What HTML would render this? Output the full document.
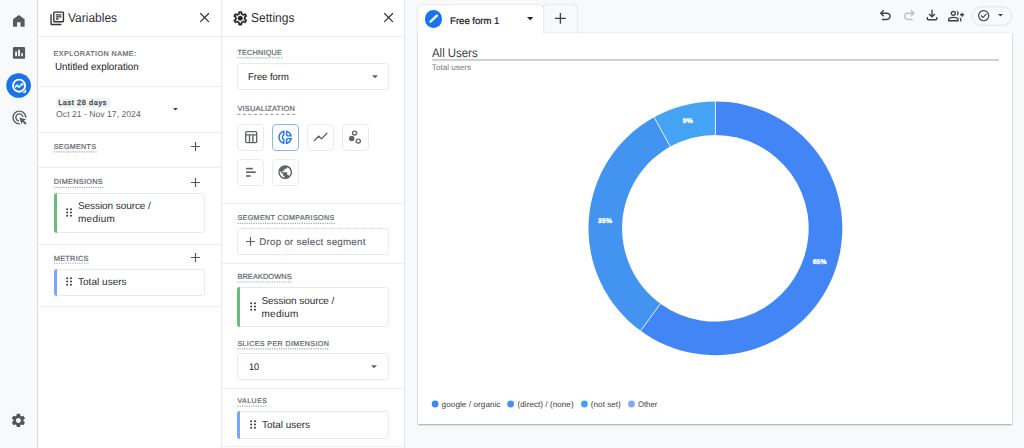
<!DOCTYPE html>
<html><head><meta charset="utf-8"><title>Explorations</title>
<style>
*{box-sizing:border-box;margin:0;padding:0}
html,body{width:1024px;height:448px;overflow:hidden;background:#f8f9fa;font-family:"Liberation Sans",sans-serif;color:#202124}
.a{position:absolute}
.t{position:absolute;white-space:nowrap;line-height:1;text-rendering:geometricPrecision}
#nav{left:0;top:0;width:38px;height:448px;background:#f8f9fa;border-right:1px solid #dadce0}
#vars{left:38px;top:0;width:184px;height:448px;background:#fff;border-right:1px solid #e6e8eb}
#sets{left:222px;top:0;width:183px;height:448px;background:#fff;border-right:1px solid #e6e8eb}
.hl{position:absolute;height:1px;background:#eaecef}
.ul{position:absolute;height:0;border-top:1px dotted #9aa0a6}
.chip{position:absolute;background:#fff;border:1px solid #e8eaed;border-radius:3px}
.chip i{position:absolute;left:-1px;top:-1px;bottom:-1px;width:3px;border-radius:3px 0 0 3px}
.vis{position:absolute;width:27px;height:27px;border:1px solid #e9ebee;border-radius:4px;background:#fff}
svg{position:absolute;overflow:visible}
</style></head><body>
<div id="nav" class="a"></div>
<div id="vars" class="a"></div>
<div id="sets" class="a"></div>

<!-- nav icons -->
<svg style="left:13.1px;top:14.900px" width="11.6" height="11.800" viewBox="0 0 12 12.5" preserveAspectRatio="none" fill="#565a5f"><path d="M6 0 L0 4.500 V12.500 H4.200 V7.700 H7.800 V12.500 H12 V4.500 Z"/></svg>
<svg style="left:0;top:40px" width="38" height="24" viewBox="0 40 38 24"><rect x="12.900" y="46.900" width="12.200" height="11.900" rx="1.300" fill="#565a5f"/><rect x="15.100" y="51.500" width="1.900" height="4.700" fill="#f1f3f4"/><rect x="18.100" y="49.700" width="1.900" height="6.500" fill="#f1f3f4"/><rect x="21.200" y="53.100" width="1.700" height="3.100" fill="#f1f3f4"/></svg>
<svg style="left:0;top:70px" width="38" height="30" viewBox="0 70 38 30"><circle cx="18.600" cy="85.450" r="12.300" fill="#1a73e8"/></svg>
<svg style="left:0;top:70px" width="38" height="30" viewBox="0 70 38 30" fill="none" stroke="#fff" stroke-linejoin="round" stroke-linecap="round"><circle cx="19.080" cy="85.670" r="6.050" stroke-width="1.900"/><path d="M26.050 88.700 V92.650 H22.100 A7 7 0 0 0 26.050 88.700 Z" fill="#fff" stroke="none"/><path d="M15.400 86.900 L17.300 85 L18.900 87.300 L21.900 84.300" stroke-width="1.500"/><path d="M20.300 83.200 H23.300 V86.200 Z" fill="#fff" stroke="none"/></svg>
<svg style="left:10.8px;top:109.2px" width="16.8" height="16.8" viewBox="0 0 24 24" fill="#565a5f"><path d="M11.71 17.99C8.53 17.84 6 15.22 6 12c0-3.31 2.69-6 6-6 3.22 0 5.84 2.53 5.99 5.71l-2.1-.63C15.480 9.31 13.89 8 12 8c-2.21 0-4 1.79-4 4 0 1.89 1.31 3.48 3.08 3.89l.63 2.100zM22 12c0 .3-.01.6-.04.9l-1.970-.59c.01-.1.01-.21.01-.31 0-4.42-3.580-8-8-8s-8 3.580-8 8 3.580 8 8 8c.1 0 .21 0 .31-.01l.59 1.970c-.3.03-.6.04-.9.04-5.520 0-10-4.480-10-10S6.480 2 12 2s10 4.480 10 10zm-3.770 4.260L22 15l-10-3 3 10 1.260-3.770 4.270 4.270 1.980-1.980-4.280-4.260z"/></svg>
<svg style="left:10.100px;top:411.800px" width="16.800" height="16.800" viewBox="0 0 24 24" fill="#50545a"><path d="M19.14 12.94c.04-.3.06-.61.06-.94 0-.32-.02-.64-.07-.94l2.030-1.580c.18-.14.23-.41.12-.61l-1.920-3.320c-.12-.22-.37-.29-.59-.22l-2.390.96c-.5-.38-1.030-.7-1.620-.94l-.36-2.540c-.04-.24-.24-.41-.48-.41h-3.840c-.24 0-.43.17-.47.41l-.36 2.540c-.59.24-1.130.57-1.620.94l-2.390-.96c-.22-.08-.47 0-.59.22L2.740 8.870c-.12.21-.08.47.12.61l2.030 1.580c-.05.3-.09.63-.09.94s.02.64.07.94l-2.030 1.580c-.18.14-.23.41-.12.61l1.920 3.320c.12.22.37.29.59.22l2.390-.96c.5.38 1.030.7 1.620.94l.36 2.540c.05.24.24.41.48.41h3.840c.24 0 .44-.17.47-.41l.36-2.540c.59-.24 1.130-.56 1.620-.94l2.390.96c.22.08.47 0 .59-.22l1.920-3.320c.12-.22.07-.47-.12-.61l-2.010-1.580zM12 15.600c-1.980 0-3.600-1.620-3.600-3.600s1.620-3.600 3.600-3.600 3.600 1.620 3.600 3.600-1.620 3.600-3.600 3.600z"/></svg>

<!-- panel lines -->
<div class="hl" style="left:38px;width:183px;top:36px"></div>
<div class="hl" style="left:38px;width:183px;top:86px"></div>
<div class="hl" style="left:38px;width:183px;top:132px"></div>
<div class="hl" style="left:38px;width:183px;top:167px"></div>
<div class="hl" style="left:38px;width:183px;top:244px"></div>
<div class="hl" style="left:38px;width:183px;top:306px"></div>
<div class="hl" style="left:222px;width:182px;top:36px"></div>
<div class="hl" style="left:222px;width:182px;top:203px"></div>
<div class="hl" style="left:222px;width:182px;top:263px"></div>
<div class="hl" style="left:222px;width:182px;top:388px"></div>
<div class="hl" style="left:222px;width:182px;top:446px"></div>

<!-- header icons -->
<svg style="left:48.500px;top:9.500px" width="16.500" height="16.500" viewBox="0 0 24 24" fill="#303336"><path d="M4 6H2v14c0 1.1.9 2 2 2h14v-2H4V6zm16-4H8c-1.1 0-2 .9-2 2v12c0 1.100.9 2 2 2h12c1.1 0 2-.9 2-2V4c0-1.100-.9-2-2-2zm0 14H8V4h12v12zM10 9h8v2h-8zm0 3h4v2h-4zm0-6h8v2h-8z"/></svg>
<svg style="left:200.200px;top:13.200px" width="9.200" height="9.200" viewBox="0 0 10 10" stroke="#303336" stroke-width="1.350" fill="none"><path d="M0.3 0.3 L9.7 9.7 M9.7 0.300 L0.3 9.700"/></svg>
<svg style="left:383.700px;top:13.200px" width="9.200" height="9.200" viewBox="0 0 10 10" stroke="#303336" stroke-width="1.350" fill="none"><path d="M0.3 0.3 L9.7 9.7 M9.7 0.300 L0.3 9.700"/></svg>
<svg style="left:232.1px;top:9.6px" width="16.5" height="16.5" viewBox="0 0 24 24" fill="#202124" stroke="#202124" stroke-width="0.500"><path d="M19.43 12.98c.04-.32.07-.64.07-.98 0-.34-.03-.66-.07-.98l2.110-1.650c.19-.15.24-.42.12-.64l-2-3.460c-.09-.16-.26-.25-.44-.25-.06 0-.12.01-.17.03l-2.490 1c-.52-.4-1.080-.73-1.690-.98l-.38-2.650C14.460 2.180 14.250 2 14 2h-4c-.25 0-.46.18-.49.42l-.38 2.650c-.61.25-1.170.59-1.690.98l-2.490-1c-.06-.02-.12-.03-.18-.03-.17 0-.34.09-.43.25l-2 3.460c-.13.22-.07.49.12.64l2.110 1.650c-.04.32-.07.65-.07.98 0 .33.03.66.07.98l-2.110 1.650c-.19.15-.24.42-.12.64l2 3.460c.09.16.26.25.44.25.06 0 .12-.01.17-.03l2.490-1c.52.4 1.080.73 1.690.98l.38 2.650c.03.24.24.42.49.42h4c.25 0 .46-.18.49-.42l.38-2.650c.61-.25 1.170-.59 1.690-.98l2.490 1c.06.02.12.03.18.03.17 0 .34-.09.43-.25l2-3.460c.12-.22.07-.49-.12-.64l-2.110-1.650zm-1.980-1.710c.04.31.05.52.05.73 0 .21-.02.43-.05.73l-.14 1.130.89.7 1.080.84-.7 1.210-1.270-.51-1.040-.42-.9.68c-.43.32-.84.56-1.250.73l-1.060.43-.16 1.130-.2 1.350h-1.400l-.19-1.350-.16-1.130-1.060-.43c-.43-.18-.83-.41-1.230-.71l-.91-.7-1.060.43-1.270.51-.7-1.210 1.080-.84.890-.7-.14-1.130c-.03-.31-.05-.54-.05-.74s.02-.43.05-.73l.14-1.130-.89-.7-1.080-.84.7-1.210 1.270.51 1.040.42.9-.68c.43-.32.84-.56 1.250-.73l1.060-.43.16-1.130.2-1.350h1.390l.19 1.350.16 1.130 1.060.43c.43.18.83.41 1.230.71l.91.7 1.060-.43 1.270-.51.7 1.210-1.070.85-.89.7.14 1.130z"/><circle cx="12" cy="12" r="3.300"/></svg>

<!-- variables panel widgets -->
<div class="a" style="left:56px;top:98px;width:54px;height:10px;background:#f1f3f4"></div>
<svg style="left:173.200px;top:107.700px" width="4.900" height="2.600" viewBox="0 0 10 5" fill="#3c4043"><path d="M0 0h10L5 5z"/></svg>
<svg style="left:190.700px;top:141.900px" width="9" height="9" viewBox="0 0 9 9" stroke="#55595e" stroke-width="1.150"><path d="M0 4.500H9M4.500 0V9"/></svg>
<svg style="left:190.700px;top:177.500px" width="9" height="9" viewBox="0 0 9 9" stroke="#55595e" stroke-width="1.150"><path d="M0 4.500H9M4.500 0V9"/></svg>
<svg style="left:190.700px;top:253.300px" width="9" height="9" viewBox="0 0 9 9" stroke="#55595e" stroke-width="1.150"><path d="M0 4.500H9M4.500 0V9"/></svg>
<div class="chip" style="left:54px;top:193px;width:151px;height:40px"><i style="background:#64bd7b"></i></div>
<div class="chip" style="left:54px;top:269px;width:151px;height:27px"><i style="background:#76a8f7"></i></div>
<svg style="left:65.900px;top:207.900px" width="6.2" height="9" viewBox="0 0 6.200 9" fill="#3c4043"><circle cx="1.200" cy="1.200" r="1.050"/><circle cx="5" cy="1.200" r="1.050"/><circle cx="1.200" cy="4.500" r="1.050"/><circle cx="5" cy="4.500" r="1.050"/><circle cx="1.200" cy="7.800" r="1.050"/><circle cx="5" cy="7.800" r="1.050"/></svg>
<svg style="left:65.900px;top:277px" width="6.2" height="9" viewBox="0 0 6.200 9" fill="#3c4043"><circle cx="1.200" cy="1.200" r="1.050"/><circle cx="5" cy="1.200" r="1.050"/><circle cx="1.200" cy="4.500" r="1.050"/><circle cx="5" cy="4.500" r="1.050"/><circle cx="1.200" cy="7.800" r="1.050"/><circle cx="5" cy="7.800" r="1.050"/></svg>

<!-- settings panel widgets -->
<div class="chip" style="left:237px;top:63px;width:152px;height:27px"></div>
<svg style="left:371.500px;top:75.200px" width="6" height="3.400" viewBox="0 0 10 5" fill="#5f6368"><path d="M0 0h10L5 5z"/></svg>
<div class="vis" style="left:237px;top:124px"></div>
<div class="vis" style="left:272px;top:124px;border-color:#8ab4f8;background:#fbfdff"></div>
<div class="vis" style="left:307px;top:124px"></div>
<div class="vis" style="left:342px;top:124px"></div>
<div class="vis" style="left:237px;top:159px"></div>
<div class="vis" style="left:272px;top:159px"></div>
<svg style="left:244.900px;top:130.900px" width="12.4" height="12.4" viewBox="0 0 12.400 12.400" fill="none" stroke="#5f6368" stroke-width="1.350"><rect x="0.700" y="0.700" width="11" height="11" rx="1.200"/><path d="M0.700 3.900H11.700M4.500 3.900V11.700M7.900 3.900V11.700"/></svg>
<svg style="left:277.200px;top:128.800px" width="16.400" height="16.400" viewBox="0 0 24 24" fill="#1a73e8"><path d="M14.820 11h7.130c-.47-4.720-4.230-8.480-8.950-8.950v7.130c.85.31 1.510.97 1.820 1.820zM15 4.580C17 5.400 18.600 7 19.420 9h-3.430c-.28-.37-.62-.71-.99-.99V4.580zM2 12c0 5.190 3.950 9.450 9 9.950v-7.130C9.840 14.400 9 13.300 9 12c0-1.300.84-2.400 2-2.820V2.050c-5.050.5-9 4.760-9 9.950zm7-7.420v3.440c-1.230.92-2 2.390-2 3.980 0 1.590.77 3.060 2 3.990v3.440C6.040 18.240 4 15.350 4 12c0-3.350 2.040-6.240 5-7.420zm4 10.240v7.130c4.720-.47 8.480-4.230 8.950-8.950h-7.130c-.31.850-.97 1.510-1.820 1.820zm2 1.170c.37-.28.71-.61.990-.99h3.430C18.600 17 17 18.600 15 19.420v-3.430z"/></svg>
<svg style="left:307px;top:124px" width="27" height="27" viewBox="307 124 27 27" fill="none" stroke="#5f6368" stroke-width="1.350" stroke-linecap="round" stroke-linejoin="round"><path d="M314.400 140.600 L318.900 136.100 L321.500 138.900 L326.900 133.300"/></svg>
<svg style="left:342px;top:124px" width="27" height="27" viewBox="342 124 27 27" fill="none" stroke="#5f6368" stroke-width="1.200"><circle cx="354.600" cy="133.100" r="2.050" stroke-width="1.350"/><circle cx="351.700" cy="138.600" r="2.150" fill="#5f6368"/><circle cx="358.300" cy="141.100" r="2.050" stroke-width="1.350"/></svg>
<svg style="left:237px;top:159px" width="27" height="27" viewBox="237 159 27 27" fill="#5f6368"><rect x="246.100" y="167.800" width="6.800" height="1.600"/><rect x="246.100" y="171.400" width="9.700" height="1.600"/><rect x="246.100" y="175.200" width="4.500" height="1.600"/></svg>
<svg style="left:277.200px;top:164px" width="16.400" height="16.400" viewBox="0 0 24 24" fill="#5f6368"><path d="M12 2C6.480 2 2 6.480 2 12s4.480 10 10 10 10-4.480 10-10S17.520 2 12 2zm-1 17.930c-3.950-.49-7-3.850-7-7.930 0-.62.080-1.210.21-1.790L9 15v1c0 1.100.9 2 2 2v1.930zm6.900-2.540c-.26-.81-1-1.390-1.900-1.390h-1v-3c0-.55-.45-1-1-1H8v-2h2c.55 0 1-.45 1-1V7h2c1.100 0 2-.9 2-2v-.41c2.930 1.190 5 4.060 5 7.410 0 2.080-.8 3.970-2.100 5.390z"/></svg>
<div class="a" style="left:237px;top:228px;width:152px;height:27px;border:1px dotted #d2d5d9;border-radius:3px"></div>
<svg style="left:245.900px;top:237px" width="9" height="9" viewBox="0 0 9 9" stroke="#5f6368" stroke-width="1.200"><path d="M0 4.500H9M4.500 0V9"/></svg>
<div class="chip" style="left:237px;top:287px;width:152px;height:40px"><i style="background:#64bd7b"></i></div>
<svg style="left:249.500px;top:302.400px" width="6.2" height="9" viewBox="0 0 6.200 9" fill="#3c4043"><circle cx="1.200" cy="1.200" r="1.050"/><circle cx="5" cy="1.200" r="1.050"/><circle cx="1.200" cy="4.500" r="1.050"/><circle cx="5" cy="4.500" r="1.050"/><circle cx="1.200" cy="7.800" r="1.050"/><circle cx="5" cy="7.800" r="1.050"/></svg>
<div class="chip" style="left:237px;top:353px;width:152px;height:27px"></div>
<svg style="left:371.400px;top:364.600px" width="6" height="3.400" viewBox="0 0 10 5" fill="#5f6368"><path d="M0 0h10L5 5z"/></svg>
<div class="chip" style="left:237px;top:411px;width:152px;height:28px"><i style="background:#76a8f7"></i></div>
<svg style="left:249.500px;top:420px" width="6.2" height="9" viewBox="0 0 6.200 9" fill="#3c4043"><circle cx="1.200" cy="1.200" r="1.050"/><circle cx="5" cy="1.200" r="1.050"/><circle cx="1.200" cy="4.500" r="1.050"/><circle cx="5" cy="4.500" r="1.050"/><circle cx="1.200" cy="7.800" r="1.050"/><circle cx="5" cy="7.800" r="1.050"/></svg>

<!-- main: tabs + card -->
<div class="a" style="left:543px;top:5px;width:34px;height:29px;background:#f8f9fa;border-radius:4px 4px 0 0;box-shadow:0 0 1.500px rgba(60,64,67,.38)"></div>
<div class="a" style="left:418px;top:33px;width:594px;height:391px;background:#fff;box-shadow:0 1px 1.500px rgba(60,64,67,.4),0 0 1.500px rgba(60,64,67,.18)"></div>
<div class="a" style="left:418px;top:5px;width:125px;height:30px;background:#fff;border-radius:4px 4px 0 0;box-shadow:0 0 1.500px rgba(60,64,67,.3)"></div>
<div class="a" style="left:418px;top:33px;width:125.500px;height:4px;background:#fff"></div>
<div class="a" style="left:424.900px;top:9.950px;width:17.600px;height:17.600px;border-radius:50%;background:#1a73e8"></div>
<svg style="left:424.900px;top:9.950px" width="17.600" height="17.600" viewBox="0 0 17.600 17.600" fill="none" stroke="#fff" stroke-width="2.300" stroke-linecap="round"><path d="M5.500 11.600 L11.900 5.600"/><path d="M6.500 10.700 L11 6.500" stroke="#8fb8f3" stroke-width="0.600" stroke-dasharray="0.900 0.900"/></svg>
<svg style="left:526.600px;top:16.600px" width="6.400" height="3.400" viewBox="0 0 10 5" fill="#202124"><path d="M0 0h10L5 5z"/></svg>
<svg style="left:554.800px;top:13.200px" width="10.800" height="10.800" viewBox="0 0 10.800 10.800" stroke="#3c4043" stroke-width="1.300"><path d="M0 5.400H10.800M5.400 0V10.800"/></svg>
<svg style="left:0;top:50px" width="1024" height="20" viewBox="0 50 1024 20"><rect x="432.200" y="59.100" width="566.800" height="1.700" fill="#c6c8cb"/></svg>

<!-- toolbar -->
<svg style="left:877.200px;top:7.300px" width="16.600" height="16.600" viewBox="0 0 24 24" fill="#3c4043"><path d="M7 19v-2h7.100q1.575 0 2.737-1 1.163-1 1.163-2.500T16.838 11Q15.675 10 14.100 10H7.800l2.600 2.600L9 14 4 9l5-5 1.400 1.400L7.800 8h6.300q2.425 0 4.163 1.575Q20 11.150 20 13.500q0 2.350-1.737 3.925Q16.525 19 14.100 19Z"/></svg>
<svg style="left:901.100px;top:7.300px" width="16.600" height="16.600" viewBox="0 0 24 24" fill="#bdc1c6"><path transform="translate(24,0) scale(-1,1)" d="M7 19v-2h7.100q1.575 0 2.737-1 1.163-1 1.163-2.500T16.838 11Q15.675 10 14.100 10H7.800l2.600 2.600L9 14 4 9l5-5 1.400 1.400L7.800 8h6.300q2.425 0 4.163 1.575Q20 11.150 20 13.500q0 2.350-1.737 3.925Q16.525 19 14.100 19Z"/></svg>
<svg style="left:924px;top:7.200px" width="16.100" height="16.100" viewBox="0 0 24 24" fill="#3c4043"><path d="M12 16l-5-5 1.400-1.450 2.600 2.600V4h2v8.150l2.600-2.600L17 11zm-6 4q-.825 0-1.412-.587Q4 18.825 4 18v-3h2v3h12v-3h2v3q0 .825-.587 1.413Q18.825 20 18 20z"/></svg>
<svg style="left:948.300px;top:7.600px" width="16.100" height="16.100" viewBox="0 0 24 24" fill="#3c4043"><path d="M12.500 11.950q.725-.8 1.113-1.825Q14 9.100 14 8t-.387-2.125Q13.225 4.850 12.500 4.050q1.500.2 2.500 1.325T16 8q0 1.500-1 2.625t-2.500 1.325ZM18 20v-3q0-.9-.4-1.713-.4-.812-1.050-1.437 1.275.45 2.363 1.162Q20 15.725 20 17v3Zm2-7v-2h-2V9h2V7h2v2h2v2h-2v2ZM8 12q-1.650 0-2.825-1.175Q4 9.650 4 8q0-1.650 1.175-2.825Q6.350 4 8 4q1.650 0 2.825 1.175Q12 6.350 12 8q0 1.650-1.175 2.825Q9.650 12 8 12Zm-8 8v-2.800q0-.85.438-1.563.437-.712 1.162-1.087 1.550-.775 3.150-1.163Q6.350 13 8 13t3.250.387q1.600.388 3.150 1.163.725.375 1.162 1.087Q16 16.350 16 17.200V20Zm8-10q.825 0 1.413-.588Q10 8.825 10 8t-.587-1.412Q8.825 6 8 6q-.825 0-1.412.588Q6 7.175 6 8t.588 1.412Q7.175 10 8 10Zm-6 8h12v-.8q0-.275-.137-.5-.138-.225-.363-.35-1.350-.675-2.725-1.013Q9.400 15 8 15t-2.775.337Q3.850 15.675 2.500 16.350q-.225.125-.362.350-.138.225-.138.500Z"/></svg>
<svg style="left:0;top:0" width="1024" height="40" viewBox="0 0 1024 40"><rect x="972" y="6.900" width="39.800" height="18.400" rx="9.200" fill="none" stroke="#e1e3e6" stroke-width="1"/></svg>
<svg style="left:976.600px;top:9px" width="13.400" height="13.400" viewBox="0 0 24 24" fill="#3c4043"><path d="m10.600 16.600 7.050-7.050-1.400-1.400-5.650 5.650-2.850-2.850-1.400 1.400ZM12 22q-2.075 0-3.900-.788-1.825-.787-3.175-2.137-1.350-1.350-2.137-3.175Q2 14.075 2 12t.788-3.900q.787-1.825 2.137-3.175 1.350-1.350 3.175-2.138Q9.925 2 12 2t3.900.787q1.825.788 3.175 2.138 1.350 1.350 2.137 3.175Q22 9.925 22 12t-.788 3.900q-.787 1.825-2.137 3.175-1.350 1.350-3.175 2.137Q14.075 22 12 22Zm0-2q3.350 0 5.675-2.325Q20 15.350 20 12q0-3.350-2.325-5.675Q15.350 4 12 4 8.650 4 6.325 6.325 4 8.650 4 12q0 3.350 2.325 5.675Q8.650 20 12 20Z"/></svg>
<svg style="left:998.300px;top:14.400px" width="5" height="2.700" viewBox="0 0 10 5" fill="#3c4043"><path d="M0 0h10L5 5z"/></svg>

<!-- donut -->
<svg style="left:0;top:0" width="1024" height="448" viewBox="0 0 1024 448">
<path d="M715.40 101.40 A126.9 126.9 0 1 1 640.63 330.83 L660.43 303.69 A93.3 93.3 0 1 0 715.40 135.00 Z" fill="#4285f4"/>
<path d="M640.63 330.83 A126.9 126.9 0 0 1 654.07 117.20 L670.31 146.62 A93.3 93.3 0 0 0 660.43 303.69 Z" fill="#4394f0"/>
<path d="M654.07 117.20 A126.9 126.9 0 0 1 715.40 101.40 L715.40 135.00 A93.3 93.3 0 0 0 670.31 146.62 Z" fill="#45a3f4"/>
<path d="M715.40 100.90 L715.40 135.50" stroke="#fff" stroke-width="0.8"/>
<path d="M640.34 331.24 L660.72 303.28" stroke="#fff" stroke-width="0.8"/>
<path d="M653.83 116.77 L670.55 147.06" stroke="#fff" stroke-width="0.8"/>
<circle cx="435.100" cy="404" r="3.400" fill="#4285f4"/>
<circle cx="510.600" cy="404" r="3.400" fill="#4394f0"/>
<circle cx="584.400" cy="404" r="3.400" fill="#42a1f5"/>
<circle cx="631.500" cy="404" r="3.400" fill="#7baaf7"/>
</svg>

<svg style="left:0;top:0" width="420" height="448" viewBox="0 0 420 448" fill="none" stroke="#a6aaaf" stroke-width="1.150"><path d="M54.0 151.8H96.6" stroke-dasharray="1.2 1.1"/><path d="M54.0 187.3H103.2" stroke-dasharray="1.2 1.1"/><path d="M54.0 263.2H89.1" stroke-dasharray="1.2 1.1"/><path d="M237.3 57.9H282.4" stroke-dasharray="1.2 1.1"/><path d="M237.3 114.4H295.6" stroke-dasharray="3.2 2.3"/><path d="M237.3 223.3H334.9" stroke-dasharray="1.2 1.1"/><path d="M237.3 282.0H292.3" stroke-dasharray="1.2 1.1"/><path d="M237.3 348.9H329.5" stroke-dasharray="1.2 1.1"/><path d="M237.3 406.1H267.5" stroke-dasharray="1.2 1.1"/></svg>
<!-- texts -->
<span class="t" style="left:67.70px;top:12.00px;transform:scaleX(0.9403);transform-origin:0 0;font-size:12.76px;letter-spacing:0.000px;font-weight:normal;color:#2c2f32">Variables</span>
<span class="t" style="left:251.30px;top:12.00px;transform:scaleX(0.9440);transform-origin:0 0;font-size:12.76px;letter-spacing:0.000px;font-weight:normal;color:#2c2f32">Settings</span>
<span class="t" style="left:53.60px;top:51.00px;font-size:7.14px;letter-spacing:0.487px;font-weight:normal;color:#666a70;-webkit-text-stroke:0.22px #666a70">EXPLORATION NAME:</span>
<span class="t" style="left:55.10px;top:63.00px;transform:scaleX(0.9472);transform-origin:0 0;font-size:10.34px;letter-spacing:0.000px;font-weight:normal;color:#202124">Untitled exploration</span>
<span class="t" style="left:58.20px;top:99.00px;font-size:7.36px;letter-spacing:0.583px;font-weight:normal;color:#3c4043;-webkit-text-stroke:0.28px #3c4043">Last 28 days</span>
<span class="t" style="left:56.10px;top:110.00px;font-size:8.62px;letter-spacing:0.018px;font-weight:normal;color:#5f6368">Oct 21 - Nov 17, 2024</span>
<span class="t" style="left:53.80px;top:144.00px;font-size:7.14px;letter-spacing:0.317px;font-weight:normal;color:#666a70;-webkit-text-stroke:0.22px #666a70">SEGMENTS</span>
<span class="t" style="left:53.80px;top:178.00px;font-size:7.29px;letter-spacing:0.297px;font-weight:normal;color:#666a70;-webkit-text-stroke:0.22px #666a70">DIMENSIONS</span>
<span class="t" style="left:78.00px;top:202.00px;font-size:10.0px;letter-spacing:-0.076px;font-weight:normal;color:#2b2e31;">Session source /</span>
<span class="t" style="left:78.00px;top:215.00px;font-size:10.0px;letter-spacing:0.264px;font-weight:normal;color:#2b2e31;">medium</span>
<span class="t" style="left:53.80px;top:255.00px;font-size:7.43px;letter-spacing:0.216px;font-weight:normal;color:#666a70;-webkit-text-stroke:0.22px #666a70">METRICS</span>
<span class="t" style="left:78.00px;top:278.00px;font-size:10.0px;letter-spacing:0.024px;font-weight:normal;color:#2b2e31;">Total users</span>
<span class="t" style="left:237.40px;top:49.00px;font-size:7.29px;letter-spacing:0.189px;font-weight:normal;color:#666a70;-webkit-text-stroke:0.22px #666a70">TECHNIQUE</span>
<span class="t" style="left:248.20px;top:73.00px;transform:scaleX(0.9485);transform-origin:0 0;font-size:9.93px;letter-spacing:0.000px;font-weight:normal;color:#202124">Free form</span>
<span class="t" style="left:237.40px;top:105.00px;font-size:7.43px;letter-spacing:0.198px;font-weight:normal;color:#666a70;-webkit-text-stroke:0.22px #666a70">VISUALIZATION</span>
<span class="t" style="left:237.40px;top:215.00px;font-size:7.14px;letter-spacing:0.383px;font-weight:normal;color:#666a70;-webkit-text-stroke:0.22px #666a70">SEGMENT COMPARISONS</span>
<span class="t" style="left:259.30px;top:238.00px;font-size:9.7px;letter-spacing:0.283px;font-weight:normal;color:#5f6368;-webkit-text-stroke:0.15px #5f6368">Drop or select segment</span>
<span class="t" style="left:237.40px;top:273.00px;font-size:7.43px;letter-spacing:0.077px;font-weight:normal;color:#666a70;-webkit-text-stroke:0.22px #666a70">BREAKDOWNS</span>
<span class="t" style="left:261.50px;top:297.00px;font-size:10.0px;letter-spacing:-0.076px;font-weight:normal;color:#2b2e31;">Session source /</span>
<span class="t" style="left:261.50px;top:310.00px;font-size:10.0px;letter-spacing:0.264px;font-weight:normal;color:#2b2e31;">medium</span>
<span class="t" style="left:237.40px;top:341.00px;font-size:7.14px;letter-spacing:0.377px;font-weight:normal;color:#666a70;-webkit-text-stroke:0.22px #666a70">SLICES PER DIMENSION</span>
<span class="t" style="left:248.60px;top:363.00px;transform:scaleX(0.9628);transform-origin:0 0;font-size:9.52px;letter-spacing:0.000px;font-weight:normal;color:#202124">10</span>
<span class="t" style="left:237.40px;top:399.00px;font-size:6.86px;letter-spacing:0.588px;font-weight:normal;color:#666a70;-webkit-text-stroke:0.22px #666a70">VALUES</span>
<span class="t" style="left:262.00px;top:421.00px;font-size:10.0px;letter-spacing:-0.036px;font-weight:normal;color:#2b2e31;">Total users</span>
<span class="t" style="left:450.10px;top:17.00px;font-size:9.6px;letter-spacing:-0.029px;font-weight:normal;color:#202124;-webkit-text-stroke:0.22px #202124">Free form 1</span>
<span class="t" style="left:432.40px;top:47.00px;transform:scaleX(0.9268);transform-origin:0 0;font-size:12.3px;letter-spacing:0.000px;font-weight:normal;color:#3c4043;">All Users</span>
<span class="t" style="left:431.85px;top:64.00px;font-size:8.0px;letter-spacing:0.046px;font-weight:normal;color:#757575">Total users</span>
<span class="t" style="left:682.70px;top:119.00px;font-size:6.8px;letter-spacing:0.172px;font-weight:bold;color:#ffffff;-webkit-text-stroke:0.4px #fff">9%</span>
<span class="t" style="left:598.10px;top:219.00px;font-size:6.8px;letter-spacing:0.195px;font-weight:bold;color:#ffffff;-webkit-text-stroke:0.4px #fff">35%</span>
<span class="t" style="left:812.70px;top:260.00px;font-size:6.8px;letter-spacing:0.095px;font-weight:bold;color:#ffffff;-webkit-text-stroke:0.4px #fff">65%</span>
<span class="t" style="left:441.60px;top:401.00px;font-size:8.14px;letter-spacing:0.078px;font-weight:normal;color:#3c4043">google / organic</span>
<span class="t" style="left:517.50px;top:401.00px;font-size:8.14px;letter-spacing:0.035px;font-weight:normal;color:#3c4043">(direct) / (none)</span>
<span class="t" style="left:590.85px;top:401.00px;font-size:8.14px;letter-spacing:0.023px;font-weight:normal;color:#3c4043">(not set)</span>
<span class="t" style="left:638.10px;top:401.00px;transform:scaleX(0.9470);transform-origin:0 0;font-size:8.14px;letter-spacing:0.000px;font-weight:normal;color:#3c4043">Other</span>
</body></html>
